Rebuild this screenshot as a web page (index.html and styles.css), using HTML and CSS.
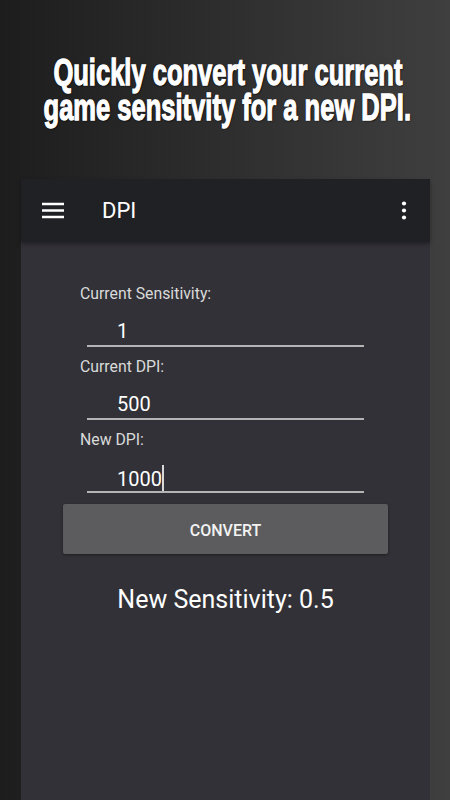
FILE: index.html
```html
<!DOCTYPE html>
<html lang="en">
<head>
    <meta charset="UTF-8">
    <meta name="viewport" content="width=device-width, initial-scale=1.0">
    <title>DPI</title>
    <link rel="stylesheet" href="styles.css">
</head>
<body>
    <h1 class="headline">
        <span class="line">Quickly convert your current</span>
        <span class="line">game sensitvity for a new DPI.</span>
    </h1>

    <div class="phone">
        <div class="toolbar">
            <svg class="menu-icon" width="24" height="24" viewBox="0 0 24 24">
                <path d="M1 5h22M1 11.5h22M1 18h22" stroke="#fff" stroke-width="2.4" fill="none"/>
            </svg>
            <span class="title">DPI</span>
            <svg class="more-icon" width="24" height="24" viewBox="0 0 24 24">
                <circle cx="12" cy="4.5" r="2.1" fill="#fff"/>
                <circle cx="12" cy="11.5" r="2.1" fill="#fff"/>
                <circle cx="12" cy="18.5" r="2.1" fill="#fff"/>
            </svg>
        </div>

        <div class="content">
            <div class="field">
                <label>Current Sensitivity:</label>
                <div class="input">1</div>
            </div>
            <div class="field">
                <label>Current DPI:</label>
                <div class="input">500</div>
            </div>
            <div class="field">
                <label>New DPI:</label>
                <div class="input">1000<span class="cursor"></span></div>
            </div>

            <button class="convert">CONVERT</button>

            <div class="result">New Sensitivity: 0.5</div>
        </div>
    </div>
</body>
</html>
```

FILE: styles.css
```css
body {
    margin: 0;
    height: 800px;
    overflow: hidden;
    background: linear-gradient(to right, #1d1d1d, #3f3f3f);
    font-family: Roboto, 'Liberation Sans', sans-serif;
}
.headline {
    margin: 0;
    padding: 55px 0 0 5px;
    height: 126px;
    box-sizing: border-box;
    display: flex;
    flex-direction: column;
    align-items: center;
    font-family: 'Liberation Sans', sans-serif;
    font-weight: bold;
    font-size: 37px;
    line-height: 35px;
    color: #fff;
    -webkit-text-stroke: 1.3px #fff;
    text-shadow: 0 0 2px #000, 1px 1px 2px #000;
}
.line {
    white-space: nowrap;
    transform: scaleX(0.69);
}
.phone {
    margin-left: 21px;
    width: 409px;
    height: 621px;
    margin-top: 53px;
    background: #313137;
}
.toolbar {
    height: 63px;
    background: #1f2124;
    display: flex;
    align-items: center;
    padding: 0 14px 0 20px;
    box-shadow: 0 2px 4px rgba(0, 0, 0, 0.35);
}
.menu-icon {
    width: 24px;
    height: 24px;
}
.title {
    color: #fff;
    font-size: 22px;
    margin-left: 37px;
    flex: 1;
}
.content {
    padding: 42px 0 0 59px;
}
.field {
    margin-bottom: 10px;
}
.field label {
    display: block;
    height: 20px;
    line-height: 20px;
    font-size: 15.8px;
    color: #dadada;
}
.input {
    margin-left: 7px;
    width: 247px;
    padding: 15px 0 2px 30px;
    height: 24px;
    line-height: 24px;
    font-size: 20px;
    color: #fff;
    border-bottom: 2px solid #b4b4b4;
}
.cursor {
    display: inline-block;
    width: 2px;
    height: 26px;
    background: #d8d8d8;
    vertical-align: -5px;
}
.convert {
    display: block;
    margin: 11px 0 0 -17px;
    width: 325px;
    height: 50px;
    background: #5c5c5e;
    border: none;
    border-radius: 2px;
    color: #f2f2f2;
    font-family: Roboto, 'Liberation Sans', sans-serif;
    font-size: 16px;
    font-weight: 500;
    padding-top: 3px;
    box-shadow: 0 1px 3px rgba(0, 0, 0, 0.4);
}
.result {
    margin: 31px 0 0 -59px;
    text-align: center;
    font-size: 25px;
    color: #fff;
}
```
